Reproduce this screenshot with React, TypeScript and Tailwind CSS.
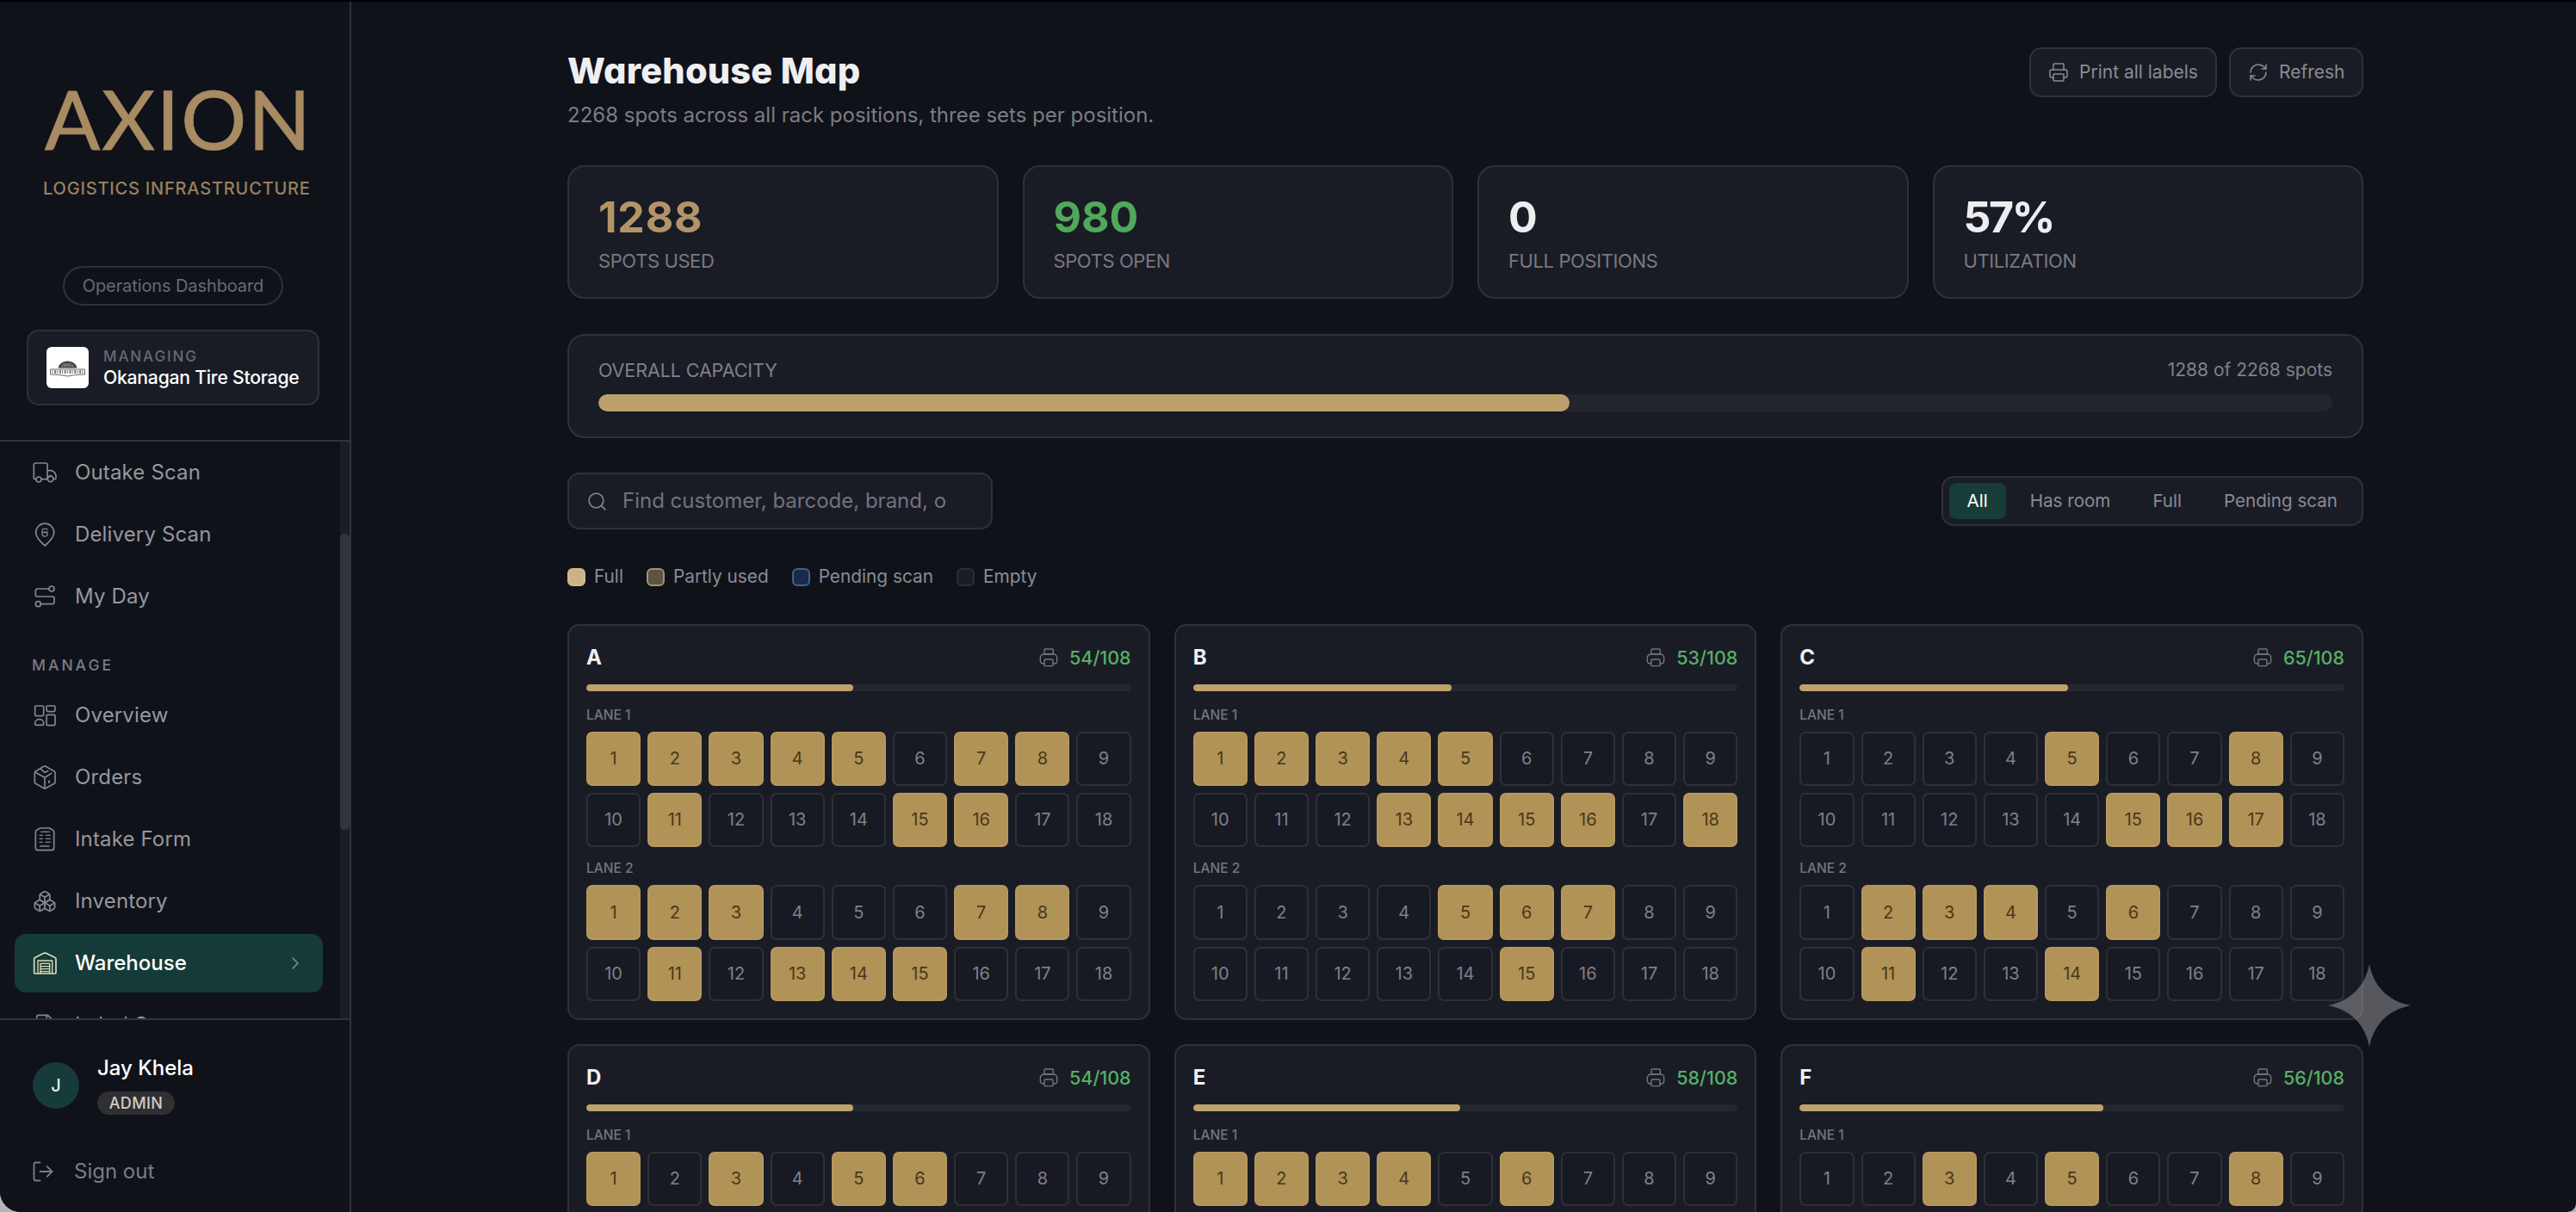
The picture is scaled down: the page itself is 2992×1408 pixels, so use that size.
import { useState, ReactNode } from "react";
import {
  Boxes,
  ChevronRight,
  FileText,
  LogOut,
  Printer,
  RefreshCw,
  Search,
} from "lucide-react";
import clsx from "clsx";

// ─────────────────────────────────────────────────────────────
// Icons
// ─────────────────────────────────────────────────────────────

function NavSvg({ children }: { children: ReactNode }) {
  return (
    <svg
      viewBox="0 0 84 84"
      className="w-7 h-7"
      fill="none"
      stroke="currentColor"
      strokeWidth={5}
      strokeLinecap="round"
      strokeLinejoin="round"
    >
      {children}
    </svg>
  );
}

const TruckIcon = () => (
  <NavSvg>
    <path d="M12 65H9a5 5 0 0 1-5-5V14a5 5 0 0 1 5-5h37a5 5 0 0 1 5 5v51H31" />
    <path d="M51 35h14c9 2 16 11 16 20v6a4 4 0 0 1-4 4h-5" />
    <circle cx="21" cy="66" r="9" />
    <circle cx="62" cy="64" r="10" />
    <path d="m55 59 7-7 7 6" />
  </NavSvg>
);

const PinIcon = () => (
  <NavSvg>
    <path d="M42.500 81C30 70 11 52 11 35a31.500 31.500 0 0 1 63 0c0 17-19 35-31.500 46z" />
    <path strokeWidth={4} d="M51 25c-5-5-17-5-18 3v14c1 8 16 8 18 1v-8H34M36 34l14-1" />
  </NavSvg>
);

const RouteIcon = () => (
  <NavSvg>
    <circle cx="66" cy="15" r="9" />
    <circle cx="19" cy="68" r="9" />
    <path d="M57 15H17a7 7 0 0 0-7 7v13a7 7 0 0 0 7 7h51a7 7 0 0 1 7 7v12a7 7 0 0 1-7 7H28" />
  </NavSvg>
);

const OverviewIcon = () => (
  <NavSvg>
    <rect x="8" y="9" width="30" height="35" rx="4" />
    <path d="M51 9h24a3 3 0 0 1 3 3v10c0 4-3 7-7 7H55c-4 0-7-3-7-7V12a3 3 0 0 1 3-3z" />
    <rect x="48" y="40" width="30" height="37" rx="4" />
    <path d="M8 73v-5c0-7 7-12 15-12s15 5 15 12v5a3 3 0 0 1-3 3H11a3 3 0 0 1-3-3z" />
  </NavSvg>
);

const OrdersIcon = () => (
  <NavSvg>
    <path d="M39 4a7 7 0 0 1 6 0l30 17a5 5 0 0 1 3 5v33a5 5 0 0 1-3 5L45 80a7 7 0 0 1-6 0L10 64a5 5 0 0 1-3-5V26a5 5 0 0 1 3-5z" />
    <path d="M8 24l34 19 13-8M42 43v37M28 13l14 12 11-5M55 35l10-7" />
    <path d="M57 56v3" strokeWidth={7} />
  </NavSvg>
);

const IntakeIcon = () => (
  <NavSvg>
    <path d="M26 3h32l10 6a9 9 0 0 1 6 9v54a8 8 0 0 1-8 8H18a8 8 0 0 1-8-8V18a9 9 0 0 1 6-9z" />
    <path
      strokeWidth={4}
      d="M29 16h29M24 28h10M46 28h15M24 40h10M46 40h15M24 52h10M46 52h15M26 66h31"
    />
  </NavSvg>
);

const WarehouseIcon = () => (
  <NavSvg>
    <path d="M5 74V28a6 6 0 0 1 4-6L39 7a8 8 0 0 1 7 0l31 15a6 6 0 0 1 4 6v46a4 4 0 0 1-4 4H9a4 4 0 0 1-4-4z" />
    <path strokeWidth={4} d="M18 78V33h50v45M27 78V43h32v35M27 53h32M27 62h32M27 71h32" />
  </NavSvg>
);

const RackPrinterIcon = () => (
  <svg
    viewBox="0 0 66 66"
    className="size-[22px] ml-auto text-[#74757e]"
    fill="none"
    stroke="currentColor"
    strokeWidth={4.2}
    strokeLinejoin="round"
  >
    <rect x="18" y="3" width="31" height="18" rx="3" />
    <path d="M18 54h-4A10 10 0 0 1 4 44V33a12 12 0 0 1 12-12h34a12 12 0 0 1 12 12v11a10 10 0 0 1-10 10h-4" />
    <rect x="18" y="39" width="30" height="23" rx="3" />
  </svg>
);

// small storefront mark inside the tenant tile
function TenantLogo() {
  return (
    <div className="w-[49px] h-12 rounded-md bg-white flex items-center justify-center">
      <svg viewBox="0 0 42 20" className="w-[43px] h-5 mt-0.5" fill="none" stroke="#3f4046">
        <path d="M10.500 9c1-4 5-7 10.500-7s9.500 3 10.500 7z" fill="#3f4046" />
        <path d="M14 7h14M16 5h10" stroke="#c9c9cc" strokeDasharray="2 1" />
        <path d="M1 11h40v6l-11 .5-9 1.500-9-1.500L1 17z" strokeWidth="0.8" />
        <path d="M3 14h37" strokeWidth="4" strokeDasharray="1 1.600 2 1.200" stroke="#7c7d82" />
      </svg>
    </div>
  );
}

// ─────────────────────────────────────────────────────────────
// Data
// ─────────────────────────────────────────────────────────────

interface NavItem {
  label: string;
  icon: ReactNode;
  active?: boolean;
}

const scanNav: NavItem[] = [
  { label: "Outake Scan", icon: <TruckIcon /> },
  { label: "Delivery Scan", icon: <PinIcon /> },
  { label: "My Day", icon: <RouteIcon /> },
];

const manageNav: NavItem[] = [
  { label: "Overview", icon: <OverviewIcon /> },
  { label: "Orders", icon: <OrdersIcon /> },
  { label: "Intake Form", icon: <IntakeIcon /> },
  { label: "Inventory", icon: <Boxes size={28} strokeWidth={1.5} /> },
  { label: "Warehouse", icon: <WarehouseIcon />, active: true },
  { label: "Label Sets", icon: <FileText size={28} strokeWidth={1.5} /> },
];

const stats = [
  { value: "1288", label: "SPOTS USED", color: "text-[#b39469] tracking-[0.8px]" },
  { value: "980", label: "SPOTS OPEN", color: "text-[#50a95a]" },
  { value: "0", label: "FULL POSITIONS", color: "text-[#ededf0]" },
  { value: "57%", label: "UTILIZATION", color: "text-[#ededf0] tracking-[-2.4px]" },
];

const filters = ["All", "Has room", "Full", "Pending scan"];

const legend = [
  { label: "Full", swatch: "bg-[#cdb285] border-[#d3ba8e]" },
  { label: "Partly used", swatch: "bg-[#5c5345] border-[#a3946f]" },
  { label: "Pending scan", swatch: "bg-[#1b2b47] border-[#3c5f93]" },
  { label: "Empty", swatch: "bg-[#1c1d22] border-[#2c2e33]" },
];

interface Rack {
  name: string;
  used: number;
  fill: number;
  slots: number;
  lanes: number[][];
}

const racks: Rack[] = [
  { name: "A", used: 54, fill: 49, slots: 18, lanes: [[1, 2, 3, 4, 5, 7, 8, 11, 15, 16], [1, 2, 3, 7, 8, 11, 13, 14, 15]] },
  { name: "B", used: 53, fill: 47.5, slots: 18, lanes: [[1, 2, 3, 4, 5, 13, 14, 15, 16, 18], [5, 6, 7, 15]] },
  { name: "C", used: 65, fill: 49.3, slots: 18, lanes: [[5, 8, 15, 16, 17], [2, 3, 4, 6, 11, 14]] },
  { name: "D", used: 54, fill: 49, slots: 9, lanes: [[1, 3, 5, 6]] },
  { name: "E", used: 58, fill: 49, slots: 9, lanes: [[1, 2, 3, 4, 6]] },
  { name: "F", used: 56, fill: 55.8, slots: 9, lanes: [[3, 5, 8]] },
];

const panel = "bg-[#1a1c25] border-2 border-[#2f313a]";

// ─────────────────────────────────────────────────────────────
// Sidebar
// ─────────────────────────────────────────────────────────────

function NavRow({ label, icon, active }: NavItem) {
  return (
    <button
      type="button"
      className={clsx(
        "flex items-center w-[358px] h-[68px] shrink-0 rounded-[13px] pl-[21px] pr-6 text-2xl",
        active ? "bg-[#153b38] text-white font-medium" : "text-[#96979d] tracking-[0.15px]"
      )}
    >
      <span className={clsx("w-[49px]", active ? "text-[#dfd9b8]" : "text-[#85868d]")}>
        {icon}
      </span>
      {label}
      {active && <ChevronRight size={24} strokeWidth={1.6} className="ml-auto -mr-1 text-[#76908b]" />}
    </button>
  );
}

function Sidebar() {
  return (
    <aside className="w-[408px] h-full shrink-0 flex flex-col border-r-2 border-[#31333b] bg-[#10121a]">
      {/* Brand */}
      <div className="h-[511px] shrink-0 border-b-2 border-[#31333b] flex flex-col items-start">
        <div className="mt-[85px] ml-[52px] h-[100px] leading-[100px] text-[95px] font-[Lato] tracking-[1.9px] text-[#a88b62] [-webkit-text-stroke:1px_#a88b62]">
          AXION
        </div>
        <div className="mt-3.5 ml-[50px] h-9 leading-9 text-[20px] font-medium tracking-[0.8px] whitespace-nowrap text-[#98815f]">
          LOGISTICS INFRASTRUCTURE
        </div>
        <div className="mt-[72px] ml-[73px] w-64 h-[46px] rounded-full border-2 border-[#2f313a] flex items-center justify-center text-xl tracking-[-0.1px] text-[#686972]">
          Operations Dashboard
        </div>
        <div className={`mt-7 ml-[31px] w-[340px] h-[88px] rounded-[14px] flex items-center pl-[21px] ${panel}`}>
          <TenantLogo />
          <div className="ml-[17px] whitespace-nowrap">
            <div className="h-[22px] leading-[22px] text-[17px] font-medium tracking-[1.9px] text-[#686972]">
              MANAGING
            </div>
            <div className="h-[26px] leading-[26px] text-[21.2px] font-medium tracking-[-0.25px] text-white">
              Okanagan Tire Storage
            </div>
          </div>
        </div>
      </div>

      {/* Nav */}
      <div className="h-[670px] shrink-0 flex overflow-hidden">
        <nav className="pt-0.5 pl-[17px] w-[395px] shrink-0 flex flex-col gap-1">
          {scanNav.map((item) => (
            <NavRow key={item.label} {...item} />
          ))}
          <div className="h-[62px] shrink-0 pt-6 pl-5 leading-9 text-[17.5px] font-medium tracking-[3px] text-[#7b7c84]">
            MANAGE
          </div>
          {manageNav.map((item) => (
            <NavRow key={item.label} {...item} />
          ))}
        </nav>
        <div className="w-[11px] shrink-0 bg-[#1b1d25] pt-[107px]">
          <div className="w-[11px] h-[344px] rounded-full bg-[#31333f]" />
        </div>
      </div>

      {/* User */}
      <div className="flex-1 border-t-2 border-[#31333b] pt-12 pl-[38px]">
        <div className="flex items-center h-14">
          <div className="size-[54px] rounded-full bg-[#173a3a] flex items-center justify-center text-xl font-medium text-[#e4ebe8]">
            J
          </div>
          <div className="ml-[21px] h-[70px]">
            <div className="h-[30px] leading-[30px] text-2xl font-medium text-white">Jay Khela</div>
            <div className="mt-3 h-[27px] w-[90px] rounded-full bg-[#302f31] flex items-center justify-center text-[18px] font-medium tracking-[0.4px] text-[#cfcdca]">
              ADMIN
            </div>
          </div>
        </div>
        <button type="button" className="mt-[52px] flex items-center h-10 text-2xl text-[#7b7c84]">
          <LogOut size={28} strokeWidth={1.6} className="-ml-0.5 mr-[22px]" />
          Sign out
        </button>
      </div>
    </aside>
  );
}

// ─────────────────────────────────────────────────────────────
// Rack card
// ─────────────────────────────────────────────────────────────

function RackCard({ rack }: { rack: Rack }) {
  const slots = Array.from({ length: rack.slots }, (_, i) => i + 1);

  return (
    <div className={`h-[460px] rounded-[14px] px-5 pt-[17px] ${panel}`}>
      <div className="flex items-center h-10">
        <span className="text-2xl font-bold text-[#f0f0f2]">{rack.name}</span>
        <RackPrinterIcon />
        <span className="ml-[13px] text-[21.5px] font-medium text-[#56b066]">{rack.used}/108</span>
      </div>
      <div className="mt-[11px] h-2 rounded-full bg-[#25272f] overflow-hidden">
        <div className="h-full rounded-full bg-[#bfa26b]" style={{ width: `${rack.fill}%` }} />
      </div>
      {rack.lanes.map((full, lane) => (
        <div key={lane} className={lane === 0 ? "mt-[18px]" : "mt-[15.5px]"}>
          <div className="h-5 leading-5 text-[15.5px] font-medium text-[#74757e]">LANE {lane + 1}</div>
          <div className={clsx("grid grid-cols-9 gap-2", lane === 0 ? "mt-[8.5px]" : "mt-[9px]")}>
            {slots.map((n) => (
              <div
                key={n}
                className={clsx(
                  "aspect-square rounded-[7px] border-2 flex items-center justify-center text-xl",
                  full.includes(n)
                    ? "bg-[#b19257] border-[#b6985e] text-[#493817]"
                    : "bg-[#181a23] border-[#2d2f39] text-[#7f8088]"
                )}
              >
                {n}
              </div>
            ))}
          </div>
        </div>
      ))}
    </div>
  );
}

// ─────────────────────────────────────────────────────────────
// Page
// ─────────────────────────────────────────────────────────────

export default function App() {
  const [filter, setFilter] = useState("All");

  return (
    <div className="relative w-[2992px] h-[1408px] overflow-hidden bg-[#b4b5b8] font-[Inter,sans-serif]">
      <div className="w-full h-full flex overflow-hidden rounded-bl-[24px] rounded-br-[10px] border-t-2 border-t-black bg-[#10121a]">
        <Sidebar />

        <main className="ml-[251px] w-[2086px] shrink-0 pt-[53px]">
          {/* Header */}
          <div className="h-[137px] flex items-start">
            <div className="pt-0.5">
              <h1 className="h-[50px] leading-[50px] text-[41.5px] font-extrabold tracking-[0.2px] text-[#efeff1] [font-feature-settings:'cv11']">
                Warehouse Map
              </h1>
              <p className="mt-[9px] h-9 leading-9 text-2xl text-[#7b7c84]">
                2268 spots across all rack positions, three sets per position.
              </p>
            </div>
            <div className="ml-auto flex gap-3.5 text-[21px] text-[#8a8b93]">
              <button type="button" className={`h-[58px] w-[218px] rounded-[14px] flex items-center pl-5 ${panel}`}>
                <Printer size={24} strokeWidth={1.5} className="mr-3" />
                Print all labels
              </button>
              <button type="button" className={`h-[58px] w-[156px] rounded-[14px] flex items-center pl-5 ${panel}`}>
                <RefreshCw size={24} strokeWidth={1.5} className="mr-3" />
                Refresh
              </button>
            </div>
          </div>

          {/* Stats */}
          <div className="grid grid-cols-4 gap-7">
            {stats.map((s) => (
              <div key={s.label} className={`h-[155px] rounded-[20px] pt-7 px-[34px] ${panel}`}>
                <div className={`h-[60px] leading-[60px] text-[50px] font-bold ${s.color}`}>{s.value}</div>
                <div className="mt-1.5 h-[30px] leading-[30px] text-[22px] tracking-[-0.4px] text-[#787981]">{s.label}</div>
              </div>
            ))}
          </div>

          {/* Capacity */}
          <div className={`mt-[41px] h-[121px] rounded-[20px] pt-[25px] px-[34px] ${panel}`}>
            <div className="flex justify-between h-[30px] leading-[30px] text-[#7f8088]">
              <span className="text-[21.5px] tracking-[-0.1px]">OVERALL CAPACITY</span>
              <span className="text-[21px]">1288 of 2268 spots</span>
            </div>
            <div className="mt-[13px] h-5 rounded-full bg-[#23252e] overflow-hidden">
              <div className="h-full rounded-full bg-[#bca06c]" style={{ width: "56%" }} />
            </div>
          </div>

          {/* Search + filters */}
          <div className="mt-10 h-[66px] flex items-center justify-between">
            <div className={`h-full w-[494px] rounded-[14px] flex items-center pl-5 ${panel}`}>
              <Search size={25} strokeWidth={1.7} className="text-[#7f8088]" />
              <input
                readOnly
                placeholder="Find customer, barcode, brand, o"
                className="ml-[17px] w-[390px] bg-transparent text-2xl placeholder:text-[#72737b] focus:outline-none"
              />
            </div>
            <div className={`h-[58px] rounded-[14px] flex items-center gap-[7px] px-[7px] text-[20.6px] ${panel}`}>
              {filters.map((f) => (
                <button
                  key={f}
                  type="button"
                  onClick={() => setFilter(f)}
                  className={clsx(
                    "h-[42px] px-[21px] rounded-lg",
                    filter === f ? "bg-[#173d38] text-white" : "text-[#8a8b93]"
                  )}
                >
                  {f}
                </button>
              ))}
            </div>
          </div>

          {/* Legend */}
          <div className="mt-10 h-[30px] flex items-center gap-[27px] text-[20.8px] text-[#8a8b93]">
            {legend.map((l) => (
              <div key={l.label} className="flex items-center gap-2.5">
                <span className={`size-[21px] rounded-md border-2 ${l.swatch}`} />
                {l.label}
              </div>
            ))}
          </div>

          {/* Racks */}
          <div className="mt-10 grid grid-cols-3 gap-7">
            {racks.map((rack) => (
              <RackCard key={rack.name} rack={rack} />
            ))}
          </div>
        </main>
      </div>

      {/* Sparkle */}
      <svg viewBox="0 0 96 96" className="absolute left-[2704px] top-[1120px] size-24" fill="#9a9a9c" fillOpacity={0.52}>
        <path d="M48 0C53 26 70 43 96 48C70 53 53 70 48 96C43 70 26 53 0 48C26 43 43 26 48 0Z" />
      </svg>
    </div>
  );
}
